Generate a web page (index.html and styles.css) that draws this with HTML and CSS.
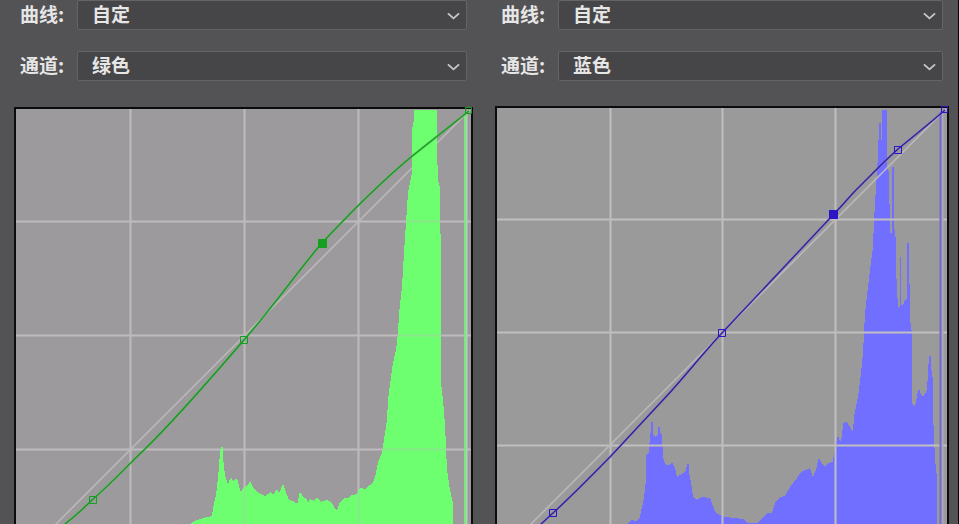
FILE: index.html
```html
<!DOCTYPE html>
<html lang="zh-CN">
<head>
<meta charset="utf-8">
<title>曲线</title>
<link rel="stylesheet" href="styles.css">
</head>
<body>
<main class="panels">
  <section class="panel panel-green">
    <form class="controls">
      <label for="curve-green">曲线:</label>
      <div class="picker">
        <select id="curve-green"><option>自定</option></select>
        <svg class="chevron" viewBox="0 0 14 8"><path d="M1 1.2 7 6.5 13 1.2"/></svg>
      </div>
      <label for="channel-green">通道:</label>
      <div class="picker">
        <select id="channel-green"><option>绿色</option></select>
        <svg class="chevron" viewBox="0 0 14 8"><path d="M1 1.2 7 6.5 13 1.2"/></svg>
      </div>
    </form>
    <svg class="graph" viewBox="14 107 459 459" preserveAspectRatio="xMinYMin slice">
      <rect class="frame" x="14" y="107" width="459" height="459"/>
      <rect class="field" x="16" y="109" width="455" height="455"/>
      <path class="grid" d="M130.500 109V564M244.500 109V564M358.500 109V564M16 221.500H471M16 335.500H471M16 449.500H471"/>
      <path class="base" d="M16 564 470 110"/>
      <path class="hist" d="M190 564V524L195 521 203 518 212 516 213 508 216 495 218 478 220 453 221 447H223L223 457 225 475 228 485 230 479 232 478 233 481 235 479 238 480 239 487 241 492 244 487 248 485 250 481 253 487 257 492 265 496 268 494 270 492 273 495 277 489 279 493 283 484 285 489 287 495 289 500 293 501 295 503 298 503 299 493 301 493 304 498 307 499 308 503 310 499 314 501 317 497 321 502 326 500 330 501 333 505 336 510 338 508 340 502 344 498 348 498 352 495 357 494 360 488 365 489 370 485 373 483 376 473 378 462 382 453 384 440 385 433 387 420 388 400 391 377 393 363 396 350 398 333 399 313 402 287 404 253 406 223 408 193 412 173V130L414 120V110H437V150L438 180 440 188V228L441 240V383L443 400 445 425 446 447 447 470 450 490 453 503V564Z"/>
      <path class="grid over" d="M244.500 487V564M358.500 492V564M398 335.500H441M406 221.500H440M382 449.500H446"/>
      <path class="edge-glow" d="M466.500 114V564"/>
      <path class="edge" d="M465 114V564"/>
      <path class="curve-glow" d="M20 564 65 524C74 517 84 508 92 500C112 483 128 465 145 449C178 417 211 378 244 340C273 307 297 272 322 243C350 213 380 183 411 157L469 111"/>
      <path class="curve" d="M20 564 65 524C74 517 84 508 92 500C112 483 128 465 145 449C178 417 211 378 244 340C273 307 297 272 322 243C350 213 380 183 411 157L469 111"/>
      <path class="node" d="M89.500 496.500h7v7h-7zM240.500 336.500h7v7h-7zM465.500 107.500h6v6h-6z"/>
      <rect class="node-on" x="318" y="239" width="9" height="9"/>
    </svg>
  </section>
  <section class="panel panel-blue">
    <form class="controls">
      <label for="curve-blue">曲线:</label>
      <div class="picker">
        <select id="curve-blue"><option>自定</option></select>
        <svg class="chevron" viewBox="0 0 14 8"><path d="M1 1.2 7 6.5 13 1.2"/></svg>
      </div>
      <label for="channel-blue">通道:</label>
      <div class="picker">
        <select id="channel-blue"><option>蓝色</option></select>
        <svg class="chevron" viewBox="0 0 14 8"><path d="M1 1.2 7 6.5 13 1.2"/></svg>
      </div>
    </form>
    <svg class="graph" viewBox="495 106 454 454" preserveAspectRatio="xMinYMin slice">
      <rect class="frame" x="495" y="106" width="454" height="454"/>
      <rect class="field" x="497" y="108" width="450" height="450"/>
      <path class="hist" d="M628 558V524L631 520 637 521 640 517 642 507 644 498 646 480V455L649 453 650 433H651V422H653V435L655 437 658 434V427H660V433L662 434 663 458 666 465 669 465 672 462 675 468 677 477 683 473 686 470 687 464H689V472L691 482 693 497 696 500 702 497 710 498 713 506 716 513 725 517 743 519 747 523 757 523 763 518 767 513 772 513 775 503 780 497 785 496 790 487 797 478 802 471 806 470 810 468 813 477 817 467 818 459H820L821 463 825 467 828 463 833 462 834 453 836 446 837 437H839L840 443 842 437 843 423 847 422 850 427 853 432 854 417 858 397 861 373 863 353 864 333 865 313 868 287 870 270 873 247 874 220 877 170 878 157 879 123H881V140H882V110H887V165L889 173 890 233H892V167H894V227L896 240V270L898 307H900V257H901V305H903L905 300 907 298V243H909V280L910 287V320L912 333V403L915 407 917 397 918 390H920L921 395 923 397 927 390 928 373 929 356H931V367L933 380V413L935 460 937 477V558Z"/>
      <path class="grid" d="M610.500 108V558M722.500 108V558M835.500 108V558M497 219.500H947M497 332.500H947M497 445.500H947"/>
      <path class="base" d="M497 558 946 109"/>
      <path class="edge-glow" d="M942.500 112V558"/>
      <path class="edge" d="M940.500 112V558"/>
      <path class="curve-glow" d="M503 558 540 525 553 513C574 494 592 475 610 457L663 400C683 379 703 353 722 333L833 215C843 205 849 197 857 189L882 164C888 158 893 154 898 149C914 136 930 123 945 110"/>
      <path class="curve" d="M503 558 540 525 553 513C574 494 592 475 610 457L663 400C683 379 703 353 722 333L833 215C843 205 849 197 857 189L882 164C888 158 893 154 898 149C914 136 930 123 945 110"/>
      <path class="node" d="M549.500 509.500h7v7h-7zM718.500 329.500h7v7h-7zM894.500 146.500h7v7h-7zM941.500 106.500h6v6h-6z"/>
      <rect class="node-on" x="829" y="210" width="9" height="9"/>
    </svg>
  </section>
</main>
</body>
</html>
```
FILE: styles.css
```css
* {
  box-sizing: border-box;
}

body {
  margin: 0;
  background: #535254;
  color: #e6e6e6;
  font-family: "Noto Sans CJK SC", sans-serif;
  font-size: 19px;
  font-weight: 700;
}

.panels {
  display: grid;
  grid-template-columns: 480fr 479fr;
  grid-template-rows: 100vh;
}

.panel {
  display: flex;
  flex-direction: column;
  min-width: 0;
}

.panel-green {
  --hist: #6dff70;
  --curve: #16961f;
  --glow: #62bd66;
  --edge: #7be783;
  --edge-glow: #b5cfb5;
  --node: #16a022;
  --grid: #bdbbbd;
  --field: #9c9a9c;
  padding: 0 7px 0 14px;
}

.panel-blue {
  --hist: #706fff;
  --curve: #2e1d9c;
  --glow: #8a80c4;
  --edge: #746bd0;
  --edge-glow: #aaa8bd;
  --node: #2a16c4;
  --grid: #c0bfc0;
  --field: #9b9a9b;
  padding: 0 9px 0 15px;
  border-right: 1px solid #000;
}

.controls {
  display: grid;
  grid-template-columns: 57px 1fr;
  row-gap: 21px;
  align-items: center;
  padding: 0 6px 25px 6px;
}

.panel-green .controls {
  padding-bottom: 26px;
}

label {
  line-height: 26px;
  padding-bottom: 2px;
}

.picker {
  position: relative;
  height: 30px;
}

select {
  appearance: none;
  width: 100%;
  height: 100%;
  margin: 0;
  padding: 0 40px 2px 14px;
  border: 1px solid #646365;
  border-radius: 2px;
  background: #464547;
  color: inherit;
  font: inherit;
  line-height: 26px;
}

.chevron {
  position: absolute;
  right: 7px;
  top: 12px;
  width: 13px;
  height: 8px;
  fill: none;
  stroke: #c8c8c8;
  stroke-width: 2;
  pointer-events: none;
}

.graph {
  display: block;
  flex: 1;
  width: 100%;
  min-height: 0;
  overflow: hidden;
}

.frame {
  fill: #0c0c0e;
}

.field {
  fill: var(--field);
}

.grid {
  fill: none;
  stroke: var(--grid);
  stroke-width: 2;
}

.over {
  opacity: 0.35;
}

.base {
  fill: none;
  stroke: #bdb8bc;
  stroke-width: 1.5;
}

.hist {
  fill: var(--hist);
  shape-rendering: crispEdges;
}

.edge {
  fill: none;
  stroke: var(--edge);
  stroke-width: 2;
}

.edge-glow {
  fill: none;
  stroke: var(--edge-glow);
  stroke-width: 2;
}

.curve {
  fill: none;
  stroke: var(--curve);
  stroke-width: 1.3;
}

.curve-glow {
  fill: none;
  stroke: var(--glow);
  stroke-width: 3;
  opacity: 0.4;
}

.node {
  fill: none;
  stroke: var(--node);
  stroke-width: 1;
}

.node-on {
  fill: var(--node);
}
```
